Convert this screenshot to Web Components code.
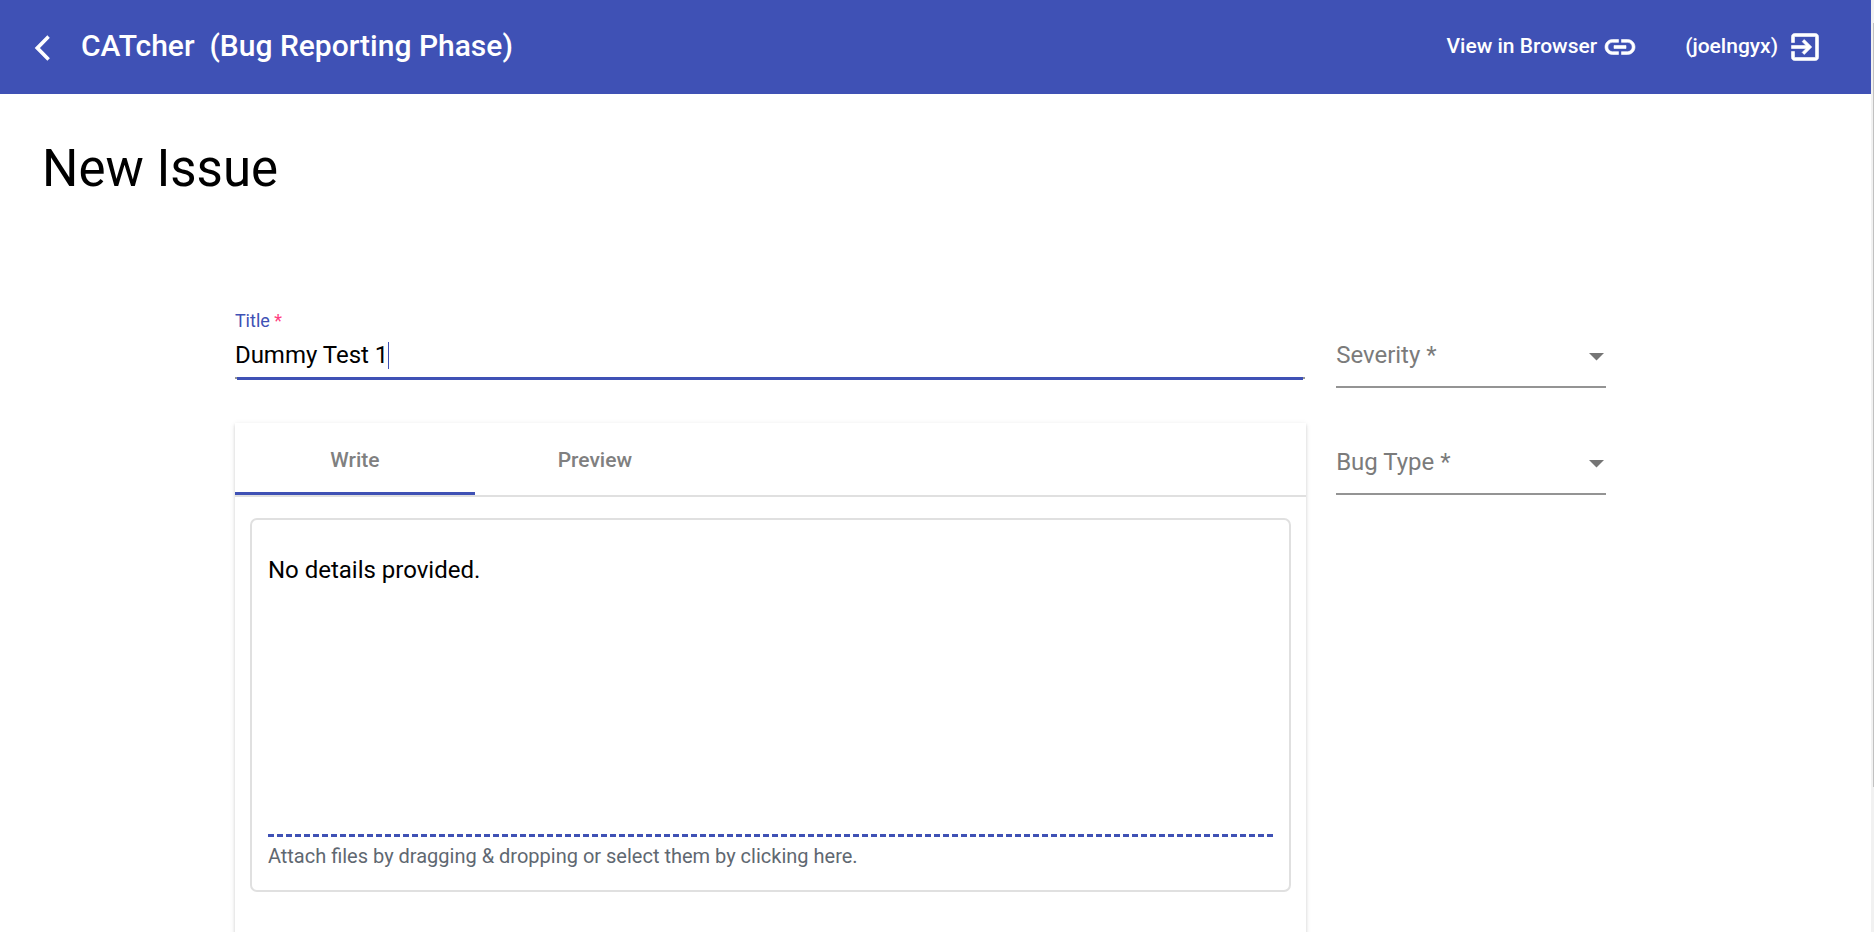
<!DOCTYPE html>
<html lang="en">
<head>
<meta charset="utf-8">
<title>CATcher</title>
<style>
body { margin: 0; font-family: Roboto, "Liberation Sans", sans-serif; color: rgba(0,0,0,.87); }
</style>
</head>
<body>
<cat-app>
  <cat-header slot="header" phase="(Bug Reporting Phase)" user="(joelngyx)"></cat-header>
  <cat-new-issue></cat-new-issue>
</cat-app>

<template id="cat-app">
  <style>
    :host { display: flex; height: 100vh; background: #fff; }
    .scroller { flex: 1; min-width: 0; overflow-y: auto; scrollbar-width: none; }
    .rail { width: 3px; background: #f1f1f1; display: flex; justify-content: flex-end; align-items: flex-start; padding-top: 23px; box-sizing: border-box; }
    .thumb { width: 1px; height: 84%; background: #c1c1c1; }
  </style>
  <div class="scroller"><slot name="header"></slot><slot></slot></div>
  <div class="rail" aria-hidden="true"><div class="thumb"></div></div>
</template>

<template id="cat-header">
  <style>
    :host { display: block; background: #3f51b5; color: #fff; }
    header { display: flex; align-items: center; height: 94px; padding: 0 48px 0 35px; box-sizing: border-box; font-weight: 500; }
    button, a { font: inherit; color: inherit; background: none; border: 0; padding: 0; text-decoration: none; cursor: pointer; }
    svg { display: block; fill: currentColor; }
    .back { padding-top: 2px; margin-right: 31px; }
    .back svg { stroke: currentColor; stroke-width: 1; overflow: visible; }
    h1 { margin: 0; font-size: 30px; line-height: 36px; font-weight: 500; white-space: pre; padding-bottom: 2px; }
    .grow { flex: 1; }
    .link { display: flex; align-items: center; font-size: 21px; line-height: 24px; gap: 5px; }
    .link span { padding-bottom: 2px; }
    .user { margin-left: 47px; gap: 9px; }
  </style>
  <header>
    <button class="back" aria-label="Back"><svg width="15" height="26" viewBox="0 2 12 20"><path d="M11.2 3.87L9.900 2.600 0.500 12l9.400 9.400 1.300-1.270L3.200 12z"/></svg></button>
    <h1></h1>
    <div class="grow"></div>
    <a class="link" href="#browser"><span>View in Browser</span><svg width="36" height="36" viewBox="0 0 24 24"><path d="M3.9 12c0-1.71 1.39-3.1 3.1-3.1h4V7H7c-2.76 0-5 2.24-5 5s2.24 5 5 5h4v-1.9H7c-1.71 0-3.1-1.39-3.1-3.1zM8 13h8v-2H8v2zm9-6h-4v1.9h4c1.71 0 3.1 1.39 3.1 3.1s-1.39 3.1-3.1 3.1h-4V17h4c2.76 0 5-2.24 5-5s-2.24-5-5-5z" stroke="currentColor" stroke-width=".4"/></svg></a>
    <button class="link user"><span class="name"></span><svg width="36" height="36" viewBox="0 0 24 24"><path d="M10.09 15.59L11.5 17l5-5-5-5-1.41 1.41L12.67 11H3v2h9.67l-2.58 2.59zM19 3H5c-1.11 0-2 .9-2 2v4h2V5h14v14H5v-4H3v4c0 1.1.89 2 2 2h14c1.1 0 2-.9 2-2V5c0-1.1-.9-2-2-2z" stroke="currentColor" stroke-width=".4"/></svg></button>
  </header>
</template>

<template id="cat-new-issue">
  <style>
    :host { display: block; padding: 48px 0; }
    h2 { margin: 0 0 96px 42px; font-size: 51px; line-height: 54px; font-weight: 400; color: #000; }
    form { display: grid; grid-template-columns: minmax(0, 1fr) 270px; column-gap: 30px; width: 75%; margin: 0 auto; padding: 0 31px 0 1px; box-sizing: border-box; }
    .main { display: grid; gap: 43px; }
    .side { display: grid; align-content: start; gap: 57px; padding-top: 46px; }
  </style>
  <h2>New Issue</h2>
  <form>
    <div class="main">
      <cat-text-field label="Title" value="Dummy Test 1"></cat-text-field>
      <cat-editor></cat-editor>
    </div>
    <div class="side">
      <cat-select label="Severity *" options="Low,Medium,High"></cat-select>
      <cat-select label="Bug Type *" options="Functionality Bug,Feature Flaw,Documentation Bug"></cat-select>
    </div>
  </form>
</template>

<template id="cat-text-field">
  <style>
    :host { display: block; padding-top: 18px; }
    label { display: block; font-size: 18px; line-height: 21px; color: #3f51b5; }
    .star { color: #ff4081; }
    .row { display: flex; align-items: center; height: 46px; box-sizing: border-box; padding-top: 2px; }
    input { field-sizing: content; font: 24px/28px Roboto, sans-serif; color: #000; border: 0; padding: 0; outline: 0; background: none; caret-color: transparent; }
    .caret { width: 1px; height: 27px; background: #3f51b5; }
    .line { height: 3px; margin-right: 1px; display: flex; background: linear-gradient(#949494 2px, transparent 2px); padding: 0 2px; }
    .line::before { content: ""; flex: 1; background: #3f51b5; }
  </style>
  <label for="field"><span class="text"></span> <span class="star">*</span></label>
  <div class="row"><input id="field" type="text" required><span class="caret"></span></div>
  <div class="line"></div>
</template>

<template id="cat-select">
  <style>
    :host { display: grid; grid-template-areas: "cell"; align-items: center; height: 50px; border-bottom: 2px solid #949494; box-sizing: border-box; color: #7b7b7b; font-size: 24px; line-height: 28px; }
    label, select, svg { grid-area: cell; }
    label, svg { pointer-events: none; }
    label { padding-bottom: 15px; }
    select { appearance: none; width: 100%; height: 48px; border: 0; padding: 0; background: none; font: inherit; outline: 0; }
    svg { justify-self: end; margin: 0 2px 10px 0; fill: #757575; }
  </style>
  <select id="choice" required><option value=""></option></select>
  <label for="choice"></label>
  <svg width="15" height="8" viewBox="0 0 15 8"><path d="M0 0h15L7.500 7.500z"/></svg>
</template>

<template id="cat-editor">
  <style>
    :host { display: block; min-height: 560px; background: #fff; box-shadow: 0 3px 2px -2px rgba(0,0,0,.2), 0 2px 3px rgba(0,0,0,.14), 0 1px 6px rgba(0,0,0,.08); }
    .tabs { display: flex; height: 74px; box-sizing: border-box; border-bottom: 2px solid #e0e0e0; }
    .tabs button { width: 240px; border: 0; border-bottom: 3px solid transparent; padding: 4px 0 0; background: none; font: 500 21px/24px Roboto, sans-serif; color: #808080; }
    .tabs button[aria-selected="true"] { border-bottom-color: #3f51b5; }
    .box { margin: 21px 15px 0; border: 2px solid #e0e0e0; border-radius: 7px; padding: 16px; height: 374px; box-sizing: border-box; display: flex; flex-direction: column; }
    textarea { flex: 1; resize: none; border: 0; border-bottom: 3px dashed #3f51b5; outline: 0; padding: 20px 0 0; font: 24px/28px Roboto, sans-serif; color: #000; background: none; margin-bottom: 7px; }
    label { font-size: 20px; line-height: 24px; color: #5f6871; margin-bottom: 6px; }
    input { display: none; }
  </style>
  <div class="tabs" role="tablist">
    <button type="button" role="tab" aria-selected="true">Write</button>
    <button type="button" role="tab" aria-selected="false">Preview</button>
  </div>
  <div class="box">
    <textarea aria-label="Description">No details provided.</textarea>
    <label for="files">Attach files by dragging &amp; dropping or select them by clicking here.</label>
    <input id="files" type="file" multiple>
  </div>
</template>

<script>
class CatElement extends HTMLElement {
  constructor() {
    super();
    this.attachShadow({ mode: "open" }).append(
      document.getElementById(this.localName).content.cloneNode(true));
  }
  find(selector) { return this.shadowRoot.querySelector(selector); }
}
customElements.define("cat-app", class extends CatElement {});
customElements.define("cat-header", class extends CatElement {
  connectedCallback() {
    this.find("h1").textContent = "CATcher  " + this.getAttribute("phase");
    this.find(".name").textContent = this.getAttribute("user");
  }
});
customElements.define("cat-text-field", class extends CatElement {
  connectedCallback() {
    this.find(".text").textContent = this.getAttribute("label");
    this.find("input").value = this.getAttribute("value");
  }
});
customElements.define("cat-select", class extends CatElement {
  connectedCallback() {
    this.find("label").textContent = this.getAttribute("label");
    for (const name of this.getAttribute("options").split(",")) {
      this.find("select").add(new Option(name));
    }
  }
});
customElements.define("cat-editor", class extends CatElement {
  connectedCallback() {
    const tabs = [...this.shadowRoot.querySelectorAll("[role=tab]")];
    for (const tab of tabs) {
      tab.addEventListener("click", () => tabs.forEach(t => t.setAttribute("aria-selected", String(t === tab))));
    }
  }
});
customElements.define("cat-new-issue", class extends CatElement {});
</script>
</body>
</html>
